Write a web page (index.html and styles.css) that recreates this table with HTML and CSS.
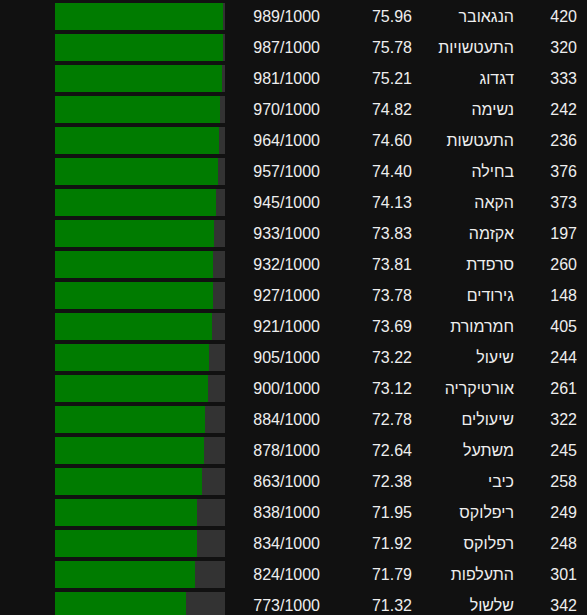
FILE: index.html
```html
<!DOCTYPE html>
<html lang="he" dir="rtl">
<head>
<meta charset="utf-8">
<link rel="stylesheet" href="styles.css">
</head>
<body>
<div class="table">
  <div class="row"><span class="rank">420</span><span class="name">הנגאובר</span><span class="score">75.96</span><span class="of">989/1000</span><span class="bar"><span class="fill" style="width:98.9%"></span></span></div>
  <div class="row"><span class="rank">320</span><span class="name">התעטשויות</span><span class="score">75.78</span><span class="of">987/1000</span><span class="bar"><span class="fill" style="width:98.7%"></span></span></div>
  <div class="row"><span class="rank">333</span><span class="name">דגדוג</span><span class="score">75.21</span><span class="of">981/1000</span><span class="bar"><span class="fill" style="width:98.1%"></span></span></div>
  <div class="row"><span class="rank">242</span><span class="name">נשימה</span><span class="score">74.82</span><span class="of">970/1000</span><span class="bar"><span class="fill" style="width:97.0%"></span></span></div>
  <div class="row"><span class="rank">236</span><span class="name">התעטשות</span><span class="score">74.60</span><span class="of">964/1000</span><span class="bar"><span class="fill" style="width:96.4%"></span></span></div>
  <div class="row"><span class="rank">376</span><span class="name">בחילה</span><span class="score">74.40</span><span class="of">957/1000</span><span class="bar"><span class="fill" style="width:95.7%"></span></span></div>
  <div class="row"><span class="rank">373</span><span class="name">הקאה</span><span class="score">74.13</span><span class="of">945/1000</span><span class="bar"><span class="fill" style="width:94.5%"></span></span></div>
  <div class="row"><span class="rank">197</span><span class="name">אקזמה</span><span class="score">73.83</span><span class="of">933/1000</span><span class="bar"><span class="fill" style="width:93.3%"></span></span></div>
  <div class="row"><span class="rank">260</span><span class="name">סרפדת</span><span class="score">73.81</span><span class="of">932/1000</span><span class="bar"><span class="fill" style="width:93.2%"></span></span></div>
  <div class="row"><span class="rank">148</span><span class="name">גירודים</span><span class="score">73.78</span><span class="of">927/1000</span><span class="bar"><span class="fill" style="width:92.7%"></span></span></div>
  <div class="row"><span class="rank">405</span><span class="name">חמרמורת</span><span class="score">73.69</span><span class="of">921/1000</span><span class="bar"><span class="fill" style="width:92.1%"></span></span></div>
  <div class="row"><span class="rank">244</span><span class="name">שיעול</span><span class="score">73.22</span><span class="of">905/1000</span><span class="bar"><span class="fill" style="width:90.5%"></span></span></div>
  <div class="row"><span class="rank">261</span><span class="name">אורטיקריה</span><span class="score">73.12</span><span class="of">900/1000</span><span class="bar"><span class="fill" style="width:90.0%"></span></span></div>
  <div class="row"><span class="rank">322</span><span class="name">שיעולים</span><span class="score">72.78</span><span class="of">884/1000</span><span class="bar"><span class="fill" style="width:88.4%"></span></span></div>
  <div class="row"><span class="rank">245</span><span class="name">משתעל</span><span class="score">72.64</span><span class="of">878/1000</span><span class="bar"><span class="fill" style="width:87.8%"></span></span></div>
  <div class="row"><span class="rank">258</span><span class="name">כיבי</span><span class="score">72.38</span><span class="of">863/1000</span><span class="bar"><span class="fill" style="width:86.3%"></span></span></div>
  <div class="row"><span class="rank">249</span><span class="name">ריפלוקס</span><span class="score">71.95</span><span class="of">838/1000</span><span class="bar"><span class="fill" style="width:83.8%"></span></span></div>
  <div class="row"><span class="rank">248</span><span class="name">רפלוקס</span><span class="score">71.92</span><span class="of">834/1000</span><span class="bar"><span class="fill" style="width:83.4%"></span></span></div>
  <div class="row"><span class="rank">301</span><span class="name">התעלפות</span><span class="score">71.79</span><span class="of">824/1000</span><span class="bar"><span class="fill" style="width:82.4%"></span></span></div>
  <div class="row"><span class="rank">342</span><span class="name">שלשול</span><span class="score">71.32</span><span class="of">773/1000</span><span class="bar"><span class="fill" style="width:77.3%"></span></span></div>
</div>
</body>
</html>
```

FILE: styles.css
```css
html, body {
  margin: 0;
  padding: 0;
  background: #111111;
}
body {
  font-family: "Liberation Sans", Arial, sans-serif;
  font-size: 16px;
  color: #eeeeee;
  overflow: hidden;
}
.table {
  direction: rtl;
  padding-top: 3px;
  padding-right: 10px;
}
.row {
  display: grid;
  grid-template-columns: 63px 102px 92px 95px 170px;
  height: 27px;
  margin-bottom: 4px;
  align-items: center;
}
.rank, .name, .score, .of {
  text-align: right;
  white-space: nowrap;
  line-height: 27px;
}
.bar {
  direction: ltr;
  display: block;
  height: 27px;
  background: #333333;
}
.fill {
  display: block;
  height: 100%;
  background: #007b00;
}
```
